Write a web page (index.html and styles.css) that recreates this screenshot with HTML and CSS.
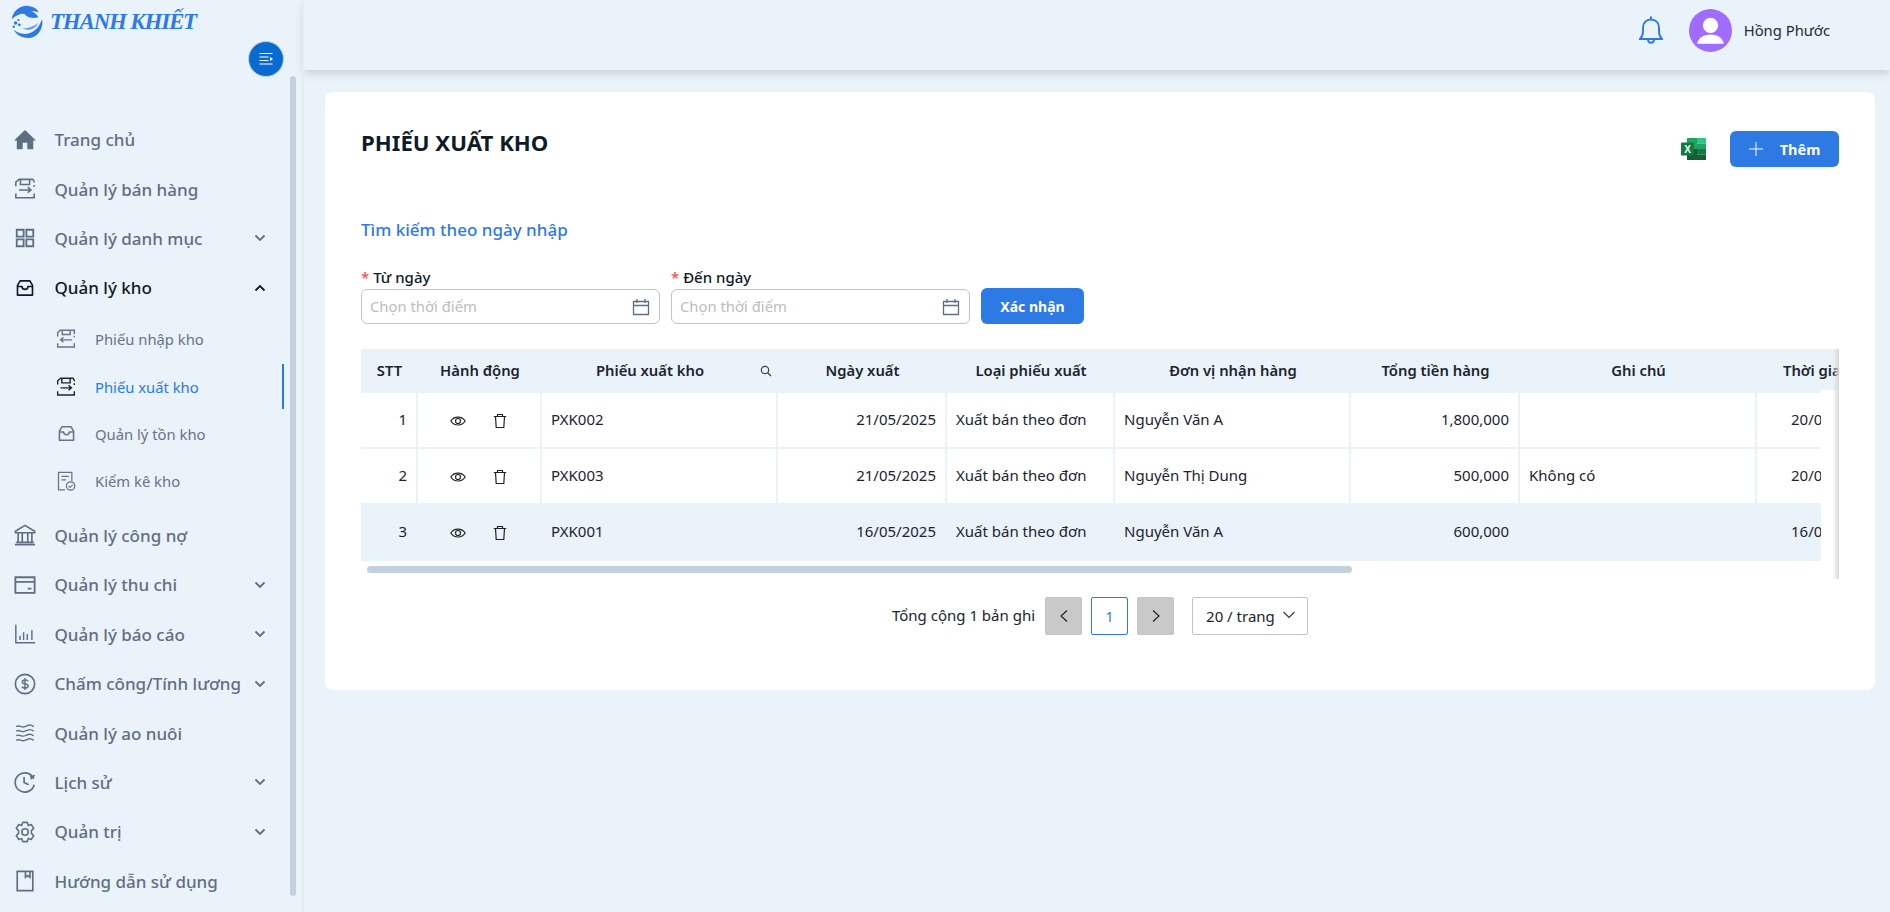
FILE: index.html
```html
<!DOCTYPE html>
<html lang="vi">
<head>
    <meta charset="UTF-8">
    <meta name="viewport" content="width=device-width, initial-scale=1.0">
    <title>Phiếu xuất kho</title>
    <link rel="stylesheet" href="styles.css">
</head>
<body>
    <svg class="icon-defs" aria-hidden="true">
        <symbol id="i-out" viewBox="0 0 24 24"><path d="M2 9V4.5L5.5 1.500H20.5L22 4V5M7 1.5V7H17V1.5M22 7.500V9.500M2 17V21.5H22V17M5.5 13H18M15 10L18.5 13L15 16" fill="none" stroke="currentColor" stroke-width="1.7"/></symbol>
        <symbol id="i-in" viewBox="0 0 24 24"><path d="M2 9V4.5L5 1.5H22V6M7.5 1.5V6.5H17V1.5M22 8V10M2 17V21.5H22V17M6 13H19M9 10L5.5 13L9 16" fill="none" stroke="currentColor" stroke-width="1.7"/></symbol>
        <symbol id="i-inbox" viewBox="0 0 24 24"><path d="M5.5 2.5H18.5L22 8.5V21.5H2V8.5ZM2 10H8C8 15 16 15 16 10H22" fill="none" stroke="currentColor" stroke-width="2.2" stroke-linejoin="round"/></symbol>
        <symbol id="i-down" viewBox="0 0 12 12"><path d="M1.5 3.5L6 8L10.5 3.5" fill="none" stroke="currentColor" stroke-width="1.8"/></symbol>
        <symbol id="i-calendar" viewBox="0 0 18 18"><path d="M1.5 3.5H16.5V16.5H1.5ZM1.5 7.5H16.5M5 1V5M13 1V5" fill="none" stroke="currentColor" stroke-width="1.3"/></symbol>
        <symbol id="i-eye" viewBox="0 0 16 16"><path d="M.8 8C4 2.7 12 2.7 15.2 8C12 13.3 4 13.3 .8 8Z" fill="none" stroke="currentColor" stroke-width="1.2"/><circle cx="8" cy="8" r="2.5" fill="none" stroke="currentColor" stroke-width="1.2"/></symbol>
        <symbol id="i-trash" viewBox="0 0 16 16"><path d="M1.8 3.5H14.2M3.5 3.5L4.2 14.5H11.8L12.5 3.5M5.500 3.5V1.5H10.5V3.5" fill="none" stroke="currentColor" stroke-width="1.2"/></symbol>
    </svg>

    <div class="layout">
        <aside class="sidebar">
            <div class="brand">
                <svg class="brand-mark" viewBox="0 0 36 36">
                    <path d="M3 15C4 6 12 0 21 1C27 2 31 5 31 8C26 5 20 7 18 10C15 8 8 10 3 15Z" fill="#2d7ae4"/>
                    <path d="M16 7C22 4 29 8 31 13C27 14 22 14 19 12C17 11 16 9 16 7Z" fill="#2d7ae4"/>
                    <path d="M35 15C37 25 30 35 20 35C13 35 7 31 5 26C11 32 21 32 27 27C31 24 33 20 35 15Z" fill="#2d7ae4"/>
                    <path d="M31 19C28 25 21 28 14 25C19 25 26 23 31 19Z" fill="#5e9bec"/>
                    <circle cx="7" cy="19" r="1.8" fill="#2d7ae4"/><circle cx="11" cy="21" r="1.5" fill="#2d7ae4"/><circle cx="5" cy="23" r="1.3" fill="#2d7ae4"/><circle cx="10" cy="16" r="1.2" fill="#2d7ae4"/>
                </svg>
                <span class="brand-name">THANH KHIẾT</span>
            </div>
            <div class="toggle-row">
                <button class="toggle-btn" aria-label="Thu gọn">
                    <svg viewBox="0 0 16 16" width="16" height="16"><path d="M1.5 2.5H14.5M1.5 6H10.5M1.5 9.5H10.5M1.5 13H14.5" stroke="#fff" stroke-width="1.2"/><path d="M12 6L15 8L12 10Z" fill="#fff"/></svg>
                </button>
            </div>
            <nav class="menu">
                <a class="menu-item">
                    <svg class="menu-icon" viewBox="0 0 24 24"><path d="M12 1L24 12.5H21V22H14.5V15H9.5V22H3V12.5H0Z" fill="currentColor"/></svg>
                    <span class="menu-label">Trang chủ</span>
                </a>
                <a class="menu-item">
                    <svg class="menu-icon"><use href="#i-out"/></svg>
                    <span class="menu-label">Quản lý bán hàng</span>
                </a>
                <a class="menu-item">
                    <svg class="menu-icon" viewBox="0 0 24 24"><path d="M3 3H10.5V10.5H3ZM13.5 3H21V10.5H13.5ZM3 13.5H10.5V21H3ZM13.5 13.5H21V21H13.5Z" fill="none" stroke="currentColor" stroke-width="2"/></svg>
                    <span class="menu-label">Quản lý danh mục</span>
                    <svg class="menu-caret"><use href="#i-down"/></svg>
                </a>
                <a class="menu-item is-open">
                    <svg class="menu-icon"><use href="#i-inbox" width="18" height="18" x="2" y="2"/></svg>
                    <span class="menu-label">Quản lý kho</span>
                    <svg class="menu-caret flip"><use href="#i-down"/></svg>
                </a>
                <div class="submenu">
                    <a class="sub-item">
                        <svg class="sub-icon"><use href="#i-in"/></svg>
                        <span>Phiếu nhập kho</span>
                    </a>
                    <a class="sub-item is-active">
                        <svg class="sub-icon"><use href="#i-out"/></svg>
                        <span>Phiếu xuất kho</span>
                    </a>
                    <a class="sub-item">
                        <svg class="sub-icon small"><use href="#i-inbox"/></svg>
                        <span>Quản lý tồn kho</span>
                    </a>
                    <a class="sub-item">
                        <svg class="sub-icon" viewBox="0 0 24 24"><path d="M11 22.5H3V1.5H19V12M6.5 6.5H15.5M6.5 10.5H12" fill="none" stroke="currentColor" stroke-width="1.5"/><circle cx="17.5" cy="18" r="5" fill="none" stroke="currentColor" stroke-width="1.5"/><path d="M15.3 18L17 19.7L20 16.5" fill="none" stroke="currentColor" stroke-width="1.3"/></svg>
                        <span>Kiểm kê kho</span>
                    </a>
                </div>
                <a class="menu-item">
                    <svg class="menu-icon" viewBox="0 0 24 24"><path d="M12 1.5L22.5 8V9.5H1.5V8ZM4.5 10V19M9 10V19M15 10V19M19.5 10V19M2.5 20H21.5M1 22.5H23" fill="none" stroke="currentColor" stroke-width="1.8"/></svg>
                    <span class="menu-label">Quản lý công nợ</span>
                </a>
                <a class="menu-item">
                    <svg class="menu-icon" viewBox="0 0 24 24"><path d="M1.5 3.5H22.5V20.5H1.5ZM1.5 8.5H22.5M15 16H19" fill="none" stroke="currentColor" stroke-width="2"/></svg>
                    <span class="menu-label">Quản lý thu chi</span>
                    <svg class="menu-caret"><use href="#i-down"/></svg>
                </a>
                <a class="menu-item">
                    <svg class="menu-icon" viewBox="0 0 24 24"><path d="M2 2V21.5H23M6.5 14V18.5M10.5 10V18.5M14.5 12V18.5M19.5 8V18.5" fill="none" stroke="currentColor" stroke-width="1.6"/></svg>
                    <span class="menu-label">Quản lý báo cáo</span>
                    <svg class="menu-caret"><use href="#i-down"/></svg>
                </a>
                <a class="menu-item">
                    <svg class="menu-icon" viewBox="0 0 24 24"><circle cx="12" cy="12" r="10.5" fill="none" stroke="currentColor" stroke-width="1.8"/><path d="M15.5 8.8C14.5 7 9 7 9 9.8C9 13 15.5 11 15.5 14.3C15.5 17 10 17 8.5 15M12 5.5V18.5" fill="none" stroke="currentColor" stroke-width="1.5"/></svg>
                    <span class="menu-label">Chấm công/Tính lương</span>
                    <svg class="menu-caret"><use href="#i-down"/></svg>
                </a>
                <a class="menu-item">
                    <svg class="menu-icon" viewBox="0 0 24 24"><path d="M2.5 5C6 2.5 8 7 12 5S18 2.5 21.5 5M2.5 10C6 7.5 8 12 12 10S18 7.5 21.5 10M2.5 15C6 12.5 8 17 12 15S18 12.5 21.5 15M2.5 20C6 17.5 8 22 12 20S18 17.5 21.5 20" fill="none" stroke="currentColor" stroke-width="1.5"/></svg>
                    <span class="menu-label">Quản lý ao nuôi</span>
                </a>
                <a class="menu-item">
                    <svg class="menu-icon" viewBox="0 0 24 24"><path d="M21.5 8.5A10.5 10.5 0 1 0 22 15M18 3.5L19 8L22.5 4.5M11 6.5V12.5L16 15" fill="none" stroke="currentColor" stroke-width="1.8"/></svg>
                    <span class="menu-label">Lịch sử</span>
                    <svg class="menu-caret"><use href="#i-down"/></svg>
                </a>
                <a class="menu-item">
                    <svg class="menu-icon" viewBox="0 0 24 24"><path d="M9.5 1.5H14.5L15.5 4.8L18.8 3.8L21.5 8L19 10.5V13.5L21.5 16L18.8 20.2L15.5 19.2L14.5 22.5H9.5L8.5 19.2L5.2 20.2L2.5 16L5 13.5V10.5L2.5 8L5.2 3.8L8.5 4.8Z" fill="none" stroke="currentColor" stroke-width="1.7" stroke-linejoin="round"/><circle cx="12" cy="12" r="3.5" fill="none" stroke="currentColor" stroke-width="1.7"/></svg>
                    <span class="menu-label">Quản trị</span>
                    <svg class="menu-caret"><use href="#i-down"/></svg>
                </a>
                <a class="menu-item">
                    <svg class="menu-icon" viewBox="0 0 24 24"><path d="M3.5 1.5H20.5V22.5H3.5ZM12.5 1.5V8L15 6L17.5 8V1.5" fill="none" stroke="currentColor" stroke-width="1.8"/></svg>
                    <span class="menu-label">Hướng dẫn sử dụng</span>
                </a>
            </nav>
            <div class="sidebar-scroll"></div>
        </aside>

        <div class="main">
            <header class="topbar">
                <svg class="bell" viewBox="0 0 24 30" width="24" height="30"><path d="M1 24H23C20 21 20 18 20 13C20 8 17 4.5 12 4.5C7 4.5 4 8 4 13C4 18 4 21 1 24ZM12 1.5V4.5M9 24C9 29 15 29 15 24" fill="none" stroke="#2d7ae4" stroke-width="2"/></svg>
                <div class="avatar">
                    <svg viewBox="0 0 42 42" width="43" height="43"><circle cx="21" cy="16" r="7.5" fill="#fff"/><path d="M8 34C10 22 32 22 34 34Z" fill="#fff"/></svg>
                </div>
                <span class="user-name">Hồng Phước</span>
            </header>

            <main class="content">
                <section class="card">
                    <div class="card-head">
                        <h1>PHIẾU XUẤT KHO</h1>
                        <div class="card-actions">
                            <svg class="excel" viewBox="0 0 26 24" width="26" height="24">
                                <path d="M6 1H16V12H6Z" fill="#21a366"/><path d="M16 1H25V6.5H16Z" fill="#33c481"/><path d="M16 6.5H25V12H16Z" fill="#21a366"/><path d="M6 12H16V23H6Z" fill="#185c37"/><path d="M16 12H25V17.5H16Z" fill="#107c41"/><path d="M16 17.5H25V23H16V17.5Z" fill="#185c37"/>
                                <rect x="0" y="5.5" width="13" height="13" rx="1" fill="#107c41"/>
                                <text x="6.5" y="15.5" class="excel-x">X</text>
                            </svg>
                            <button class="add-btn">
                                <svg viewBox="0 0 14 14" width="14" height="14"><path d="M7 0V14M0 7H14" stroke="#fff" stroke-width="1"/></svg>
                                <span>Thêm</span>
                            </button>
                        </div>
                    </div>

                    <h2>Tìm kiếm theo ngày nhập</h2>

                    <form class="filter">
                        <div class="field">
                            <label><span class="req">*</span> Từ ngày</label>
                            <div class="date-input">
                                <span class="placeholder">Chọn thời điểm</span>
                                <svg class="calendar"><use href="#i-calendar"/></svg>
                            </div>
                        </div>
                        <div class="field">
                            <label><span class="req">*</span> Đến ngày</label>
                            <div class="date-input">
                                <span class="placeholder">Chọn thời điểm</span>
                                <svg class="calendar"><use href="#i-calendar"/></svg>
                            </div>
                        </div>
                        <button type="button" class="confirm-btn">Xác nhận</button>
                    </form>

                    <div class="table-wrap">
                        <table class="data-table">
                            <colgroup>
                                <col class="c-stt"><col class="c-act"><col class="c-code"><col class="c-date"><col class="c-type"><col class="c-unit"><col class="c-total"><col class="c-note"><col class="c-time">
                            </colgroup>
                            <thead>
                                <tr>
                                    <th>STT</th>
                                    <th>Hành động</th>
                                    <th class="th-search">Phiếu xuất kho
                                        <svg class="th-icon" viewBox="0 0 12 12"><circle cx="5" cy="5" r="3.7" fill="none" stroke="currentColor" stroke-width="1.2"/><path d="M7.8 7.8L11 11" stroke="currentColor" stroke-width="1.3"/></svg>
                                    </th>
                                    <th>Ngày xuất</th>
                                    <th>Loại phiếu xuất</th>
                                    <th>Đơn vị nhận hàng</th>
                                    <th>Tổng tiền hàng</th>
                                    <th>Ghi chú</th>
                                    <th class="th-time">Thời gian tạo</th>
                                </tr>
                            </thead>
                            <tbody>
                                <tr>
                                    <td class="num">1</td>
                                    <td class="actions"><svg class="act"><use href="#i-eye"/></svg><svg class="act"><use href="#i-trash"/></svg></td>
                                    <td>PXK002</td>
                                    <td class="num">21/05/2025</td>
                                    <td>Xuất bán theo đơn</td>
                                    <td>Nguyễn Văn A</td>
                                    <td class="num">1,800,000</td>
                                    <td></td>
                                    <td class="num">20/05/2025 10:15</td>
                                </tr>
                                <tr>
                                    <td class="num">2</td>
                                    <td class="actions"><svg class="act"><use href="#i-eye"/></svg><svg class="act"><use href="#i-trash"/></svg></td>
                                    <td>PXK003</td>
                                    <td class="num">21/05/2025</td>
                                    <td>Xuất bán theo đơn</td>
                                    <td>Nguyễn Thị Dung</td>
                                    <td class="num">500,000</td>
                                    <td>Không có</td>
                                    <td class="num">20/05/2025 10:15</td>
                                </tr>
                                <tr class="row-hover">
                                    <td class="num">3</td>
                                    <td class="actions"><svg class="act"><use href="#i-eye"/></svg><svg class="act"><use href="#i-trash"/></svg></td>
                                    <td>PXK001</td>
                                    <td class="num">16/05/2025</td>
                                    <td>Xuất bán theo đơn</td>
                                    <td>Nguyễn Văn A</td>
                                    <td class="num">600,000</td>
                                    <td></td>
                                    <td class="num">16/05/2025 10:15</td>
                                </tr>
                            </tbody>
                        </table>
                        <div class="table-edge"></div>
                        <div class="table-scroll"></div>
                    </div>

                    <div class="pagination">
                        <span class="total">Tổng cộng 1 bản ghi</span>
                        <button class="page-arrow"><svg viewBox="0 0 12 14" width="12" height="14"><path d="M9 1.5L3 7L9 12.5" fill="none" stroke="#222" stroke-width="1.2"/></svg></button>
                        <button class="page-num">1</button>
                        <button class="page-arrow"><svg viewBox="0 0 12 14" width="12" height="14"><path d="M3 1.5L9 7L3 12.5" fill="none" stroke="#222" stroke-width="1.2"/></svg></button>
                        <div class="page-size">
                            <span>20 / trang</span>
                            <svg class="size-caret" viewBox="0 0 12 12" width="12" height="12"><path d="M.5 3L6 8.500L11.5 3" fill="none" stroke="#333" stroke-width="1.1"/></svg>
                        </div>
                    </div>
                </section>
            </main>
        </div>
    </div>
</body>
</html>
```

FILE: styles.css
```css
* {
    box-sizing: border-box;
}
html, body {
    height: 100%;
}
body {
    margin: 0;
    background-color: #eaf3f9;
    color: #1c2430;
    font-family: 'Noto Sans', sans-serif;
    font-size: 15px;
    overflow: hidden;
}
.icon-defs {
    display: none;
}
.layout {
    display: flex;
    height: 912px;
}

/* sidebar */
.sidebar {
    position: relative;
    width: 304px;
    flex-shrink: 0;
    border-right: 2px solid #e3edf4;
    padding-top: 4px;
}
.brand {
    display: flex;
    align-items: center;
    gap: 6px;
    padding-left: 8px;
    height: 36px;
}
.brand-mark {
    width: 36px;
    height: 34px;
}
.brand-name {
    color: #2d7ae4;
    font-family: 'Liberation Serif', serif;
    font-size: 23px;
    font-style: italic;
    font-weight: bold;
    letter-spacing: -1.2px;
}
.toggle-row {
    display: flex;
    justify-content: flex-end;
    padding: 1px 18px 0 0;
}
.toggle-btn {
    display: flex;
    align-items: center;
    justify-content: center;
    width: 36px;
    height: 36px;
    padding: 0;
    border: 1px solid #c3cfdd;
    border-radius: 50%;
    background-color: #0a6bcf;
}
.menu {
    padding-top: 38px;
}
.menu-item {
    display: flex;
    align-items: center;
    height: 49.4px;
    padding-left: 14px;
    color: #5f6f83;
    font-size: 17px;
    font-weight: 500;
}
.menu-item.is-open {
    color: #101a28;
}
.menu-icon {
    width: 22px;
    height: 22px;
    flex-shrink: 0;
    margin-right: 18.5px;
}
.menu-label {
    flex: 1;
    white-space: nowrap;
}
.menu-caret {
    width: 12px;
    height: 12px;
    margin-right: 36px;
    flex-shrink: 0;
}
.menu-caret.flip {
    transform: rotate(180deg);
}
.submenu {
    padding: 3px 0 6px;
}
.sub-item {
    position: relative;
    display: flex;
    align-items: center;
    height: 47.3px;
    padding-left: 56px;
    color: #667587;
    font-size: 14.8px;
}
.sub-icon {
    width: 20px;
    height: 20px;
    margin-right: 19px;
    flex-shrink: 0;
}
.sub-icon.small {
    width: 17px;
    height: 17px;
    margin-left: 2px;
    margin-right: 20px;
}
.sub-item.is-active {
    color: #2d7ae4;
}
.sub-item.is-active .sub-icon {
    color: #1c2430;
}
.sub-item.is-active::after {
    content: "";
    position: absolute;
    top: 1px;
    right: 18px;
    width: 2px;
    height: 45px;
    background-color: #2d7ae4;
}
.sidebar-scroll {
    position: absolute;
    top: 76px;
    right: 6px;
    width: 6px;
    height: 820px;
    border-radius: 3px;
    background-color: #c3d1df;
}

/* header */
.main {
    flex: 1;
    min-width: 0;
    display: flex;
    flex-direction: column;
}
.topbar {
    display: flex;
    align-items: center;
    height: 70px;
    padding-right: 60px;
    padding-bottom: 10px;
    justify-content: flex-end;
    box-shadow: 0 3px 8px rgba(120, 140, 160, 0.35);
}
.bell {
    margin-right: 26px;
}
.avatar {
    display: flex;
    width: 43px;
    height: 43px;
    border-radius: 50%;
    background-color: #a06cff;
    margin-right: 12px;
}
.user-name {
    font-size: 14.8px;
    color: #222c38;
}

/* card */
.content {
    padding: 22px 15px 0 21px;
}
.card {
    background-color: #fff;
    border-radius: 8px;
    height: 598px;
    padding: 28px 36px 0;
}
.card-head {
    display: flex;
    justify-content: space-between;
    align-items: flex-start;
    height: 98px;
}
h1 {
    margin: 0;
    font-size: 22.2px;
    line-height: 46px;
    height: 46px;
    font-weight: 700;
    color: #101a28;
}
.card-actions {
    display: flex;
    align-items: center;
    gap: 23px;
    margin-top: 11px;
}
.add-btn {
    display: flex;
    align-items: center;
    justify-content: center;
    gap: 17px;
    width: 109px;
    height: 36px;
    padding: 0;
    border: none;
    border-radius: 6px;
    background-color: #2d7ae4;
    color: #fff;
    font-family: inherit;
    font-size: 14.5px;
    font-weight: 700;
}
h2 {
    margin: 0;
    color: #2d7ae4;
    font-size: 17px;
    font-weight: 500;
    line-height: 24px;
}
.filter {
    display: flex;
    align-items: flex-end;
    gap: 11px;
    margin-top: 25px;
}
.field {
    width: 299px;
}
.field label {
    display: block;
    height: 22px;
    font-size: 15px;
    font-weight: 500;
    line-height: 20px;
    color: #101a28;
}
.req {
    color: #ff4d4f;
}
.date-input {
    display: flex;
    align-items: center;
    justify-content: space-between;
    height: 35px;
    padding: 0 9px 2px 8px;
    border: 1px solid #bfc4cb;
    border-radius: 6px;
}
.placeholder {
    color: #bdbdbd;
    font-size: 14.8px;
}
.calendar {
    width: 18px;
    height: 18px;
    margin-top: 2px;
    color: #5f6f83;
}
.confirm-btn {
    width: 103px;
    height: 36px;
    border: none;
    border-radius: 6px;
    background-color: #2d7ae4;
    color: #fff;
    font-family: inherit;
    font-size: 14px;
    font-weight: 700;
}

/* table */
.table-wrap {
    position: relative;
    overflow: hidden;
    height: 231px;
    margin-top: 25px;
}
.data-table {
    table-layout: fixed;
    width: 1700px;
    border-collapse: separate;
    border-spacing: 0;
}
.c-stt { width: 57px; }
.c-act { width: 124px; }
.c-code { width: 236px; }
.c-date { width: 169px; }
.c-type { width: 168px; }
.c-unit { width: 236px; }
.c-total { width: 169px; }
.c-note { width: 237px; }
.c-time { width: 304px; }
.data-table th {
    height: 44px;
    padding: 0 10px 2px;
    background-color: #eaf3f9;
    color: #1c2430;
    font-size: 14.8px;
    font-weight: 600;
    text-align: center;
    white-space: nowrap;
}
.data-table th.th-search {
    position: relative;
    padding-right: 30px;
}
.th-icon {
    position: absolute;
    top: 16px;
    right: 6px;
    width: 12px;
    height: 12px;
    color: #444;
}
.data-table th.th-time {
    text-align: left;
    padding-left: 26px;
}
.data-table td {
    height: 56px;
    padding: 0 9px 2px;
    border-right: 2px solid #eaf3f9;
    border-bottom: 2px solid #eaf3f9;
    white-space: nowrap;
    overflow: hidden;
}
.data-table td:last-child {
    border-right: none;
}
.data-table td.num {
    text-align: right;
}
.data-table td:last-child.num {
    text-align: left;
    padding-left: 34px;
}
.row-hover td {
    background-color: #eaf3f9;
}
.actions {
    text-align: center;
}
.act {
    width: 16px;
    height: 16px;
    margin: 0 13px;
    vertical-align: middle;
    color: #222;
}
.table-edge {
    position: absolute;
    top: 0;
    right: 0;
    width: 18px;
    height: 230px;
    background: linear-gradient(90deg, rgba(220, 220, 220, 0) 65%, #d8d8d8 100%),
        linear-gradient(#fff, #fff) 0 41px no-repeat;
}
.table-scroll {
    position: absolute;
    top: 217px;
    left: 6px;
    width: 985px;
    height: 7px;
    border-radius: 4px;
    background-color: #c3d1df;
}

/* pagination */
.pagination {
    display: flex;
    align-items: center;
    justify-content: center;
    height: 38px;
    margin-top: 17px;
}
.total {
    margin-right: 10px;
    padding-bottom: 2px;
    font-size: 15px;
}
.page-arrow, .page-num {
    display: flex;
    align-items: center;
    justify-content: center;
    width: 37px;
    height: 38px;
    padding: 0;
    border-radius: 2px;
    font-family: inherit;
}
.page-arrow {
    border: 1px solid #c4c4c4;
    background-color: #c9c9c9;
}
.page-num {
    margin: 0 9px;
    border: 1px solid #2d7ae4;
    background-color: #fff;
    color: #2d7ae4;
    font-size: 14px;
}
.page-size {
    display: flex;
    align-items: center;
    justify-content: space-between;
    width: 116px;
    height: 38px;
    margin-left: 18px;
    padding: 0 12px 0 13px;
    border: 1px solid #bfc4cb;
    border-radius: 2px;
    font-size: 15px;
}
.size-caret {
    margin-bottom: 3px;
}
.excel-x {
    fill: #fff;
    font-family: 'Liberation Sans', sans-serif;
    font-size: 10px;
    font-weight: bold;
    text-anchor: middle;
}
```
